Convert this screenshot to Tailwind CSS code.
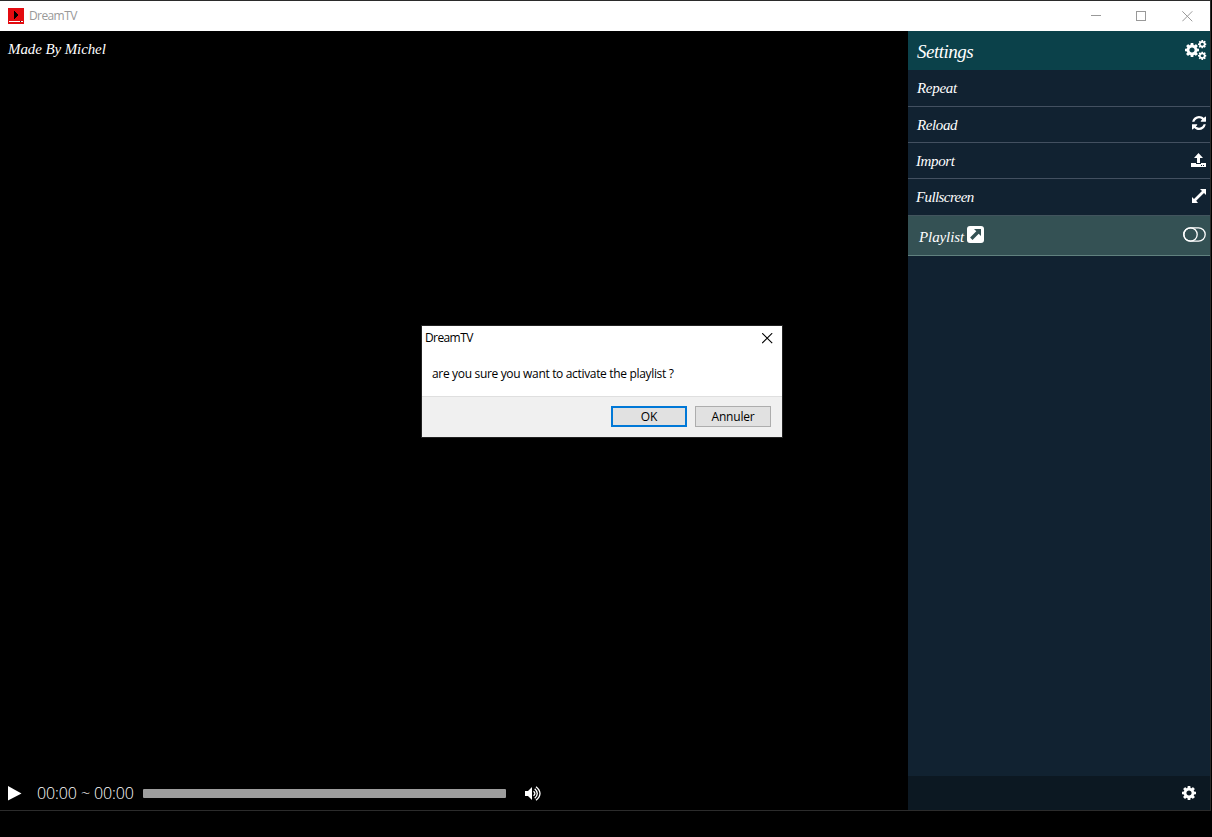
<!DOCTYPE html>
<html lang="en">
<head>
<meta charset="utf-8">
<title>DreamTV</title>
<script src="https://cdn.jsdelivr.net/npm/@tailwindcss/browser@4"></script>
</head>
<body class="relative h-[837px] w-[1212px] overflow-hidden bg-black">
<svg class="hidden">
  <symbol id="cog" viewBox="128 128 1536 1536"><path d="M1180 896q0-118-83-201t-201-83-201 83-83 201 83 201 201 83 201-83 83-201zm484-109v222q0 12-8 23t-20 13l-185 28q-19 54-39 91 35 50 107 138 10 12 10 25t-9 23q-27 37-99 108t-94 71q-12 0-26-9l-138-108q-44 23-91 38-16 136-29 186-7 28-36 28h-222q-14 0-24.500-8.500t-11.500-21.500l-28-184q-49-16-90-37l-141 107q-10 9-25 9-14 0-25-11-126-114-165-168-7-10-7-23 0-12 8-23 15-21 51-66.500t54-70.500q-27-50-41-99l-183-27q-13-2-21-12.500t-8-23.500v-222q0-12 8-23t19-13l186-28q14-46 39-92-40-57-107-138-10-12-10-24 0-10 9-23 26-36 98.500-107.500t94.500-71.500q13 0 26 10l138 107q44-23 91-38 16-136 29-186 7-28 36-28h222q14 0 24.500 8.500t11.500 21.500l28 184q49 16 90 37l142-107q9-9 24-9 13 0 25 10 129 119 165 170 7 8 7 22 0 12-8 23-15 21-51 66.500t-54 70.500q26 50 41 98l183 28q13 2 21 12.500t8 23.500z"/></symbol>
</svg>
<div class="flex h-[811px] w-[1211px] flex-col border-t border-r border-b border-[#2b2b2b]">
  <header class="flex h-[30px] shrink-0 items-center bg-white pl-2 text-[#999]">
    <svg class="-mt-px h-4 w-4" viewBox="0 0 16 16" shape-rendering="crispEdges"><rect width="16" height="16" fill="#e30b10"/><path d="M6 3v8l5-4z" fill="#000"/><rect x="1" y="13" width="14" height="1" fill="#fff"/><rect x="12" y="13" width="1" height="1" fill="#333"/></svg>
    <span class="ml-[5px] font-['Open_Sans',sans-serif] text-[12px] tracking-[-0.6px]">DreamTV</span>
    <div class="ml-auto flex items-center pr-[17px]">
      <svg class="h-[11px] w-[11px]" viewBox="0 0 11 11" shape-rendering="crispEdges"><path d="M0 4.500h10" stroke="#999"/></svg>
      <svg class="ml-[34px] h-[11px] w-[11px]" viewBox="0 0 11 11" shape-rendering="crispEdges"><path d="M.5.5h9v9h-9z" fill="none" stroke="#999"/></svg>
      <svg class="ml-[35px] h-[11px] w-[11px]" viewBox="0 0 11 11"><path d="M.3.3l10 10M10.300.3l-10 10" stroke="#999"/></svg>
    </div>
  </header>
  <div class="flex min-h-0 flex-1">
    <main class="flex w-[908px] flex-col justify-between text-white">
      <div class="flex h-9 items-center pl-2 font-['Liberation_Serif',serif] text-[15px] tracking-[-0.1px] italic">Made By Michel</div>
      <div class="flex h-[34px] items-center pl-2">
        <svg class="h-[15px] w-[14px]" viewBox="0 0 14 15" fill="#fff"><path d="M0 0l13.500 7.500L0 14.500z"/></svg>
        <span class="ml-[15px] w-[106px] font-['Open_Sans',sans-serif] text-[16px] font-light tracking-[-0.1px] whitespace-nowrap">00:00 ~ 00:00</span>
        <div class="h-[9px] w-[363px] rounded-[1px] bg-[#9d9d9d]"></div>
        <svg class="ml-[19px] h-[15px] w-4" viewBox="0 0 16 15"><path d="M0 5h3l4-4v13l-4-4H0z" fill="#fff"/><path d="M8.500 5.200q2.800 2.300 0 4.600M9.700 2.700q5.200 4.800 0 9.600M11 .7q8 6.800 0 13.600" fill="none" stroke="#fff" stroke-width="1.300"/></svg>
      </div>
    </main>
    <aside class="flex w-[302px] flex-col bg-[#112231] font-['Liberation_Serif',serif] text-[15px] text-white italic">
      <div class="flex h-[39px] shrink-0 items-center justify-between bg-[#0b414a] pr-[3px] pl-[9px] text-[19px] tracking-[-0.5px]">
        <span class="mt-[3px]">Settings</span>
        <svg class="-mt-[2px] h-5 w-[22px]" viewBox="0 0 22 20" fill="#fff"><use href="#cog" x="0" y="3" width="14" height="14"/><use href="#cog" x="13" y="0" width="8.500" height="8.500"/><use href="#cog" x="13" y="11.500" width="8.500" height="8.500"/></svg>
      </div>
      <div class="flex h-[37px] shrink-0 items-center border-b border-[#435060] pl-[9px] tracking-[-0.3px]">Repeat</div>
      <div class="flex h-9 shrink-0 items-center justify-between border-b border-[#435060] pr-1 pl-[9px]"><span class="mt-[2px] tracking-[-0.4px]">Reload</span>
        <svg class="-mt-[3px] h-[14px] w-[14px]" viewBox="128 128 1536 1536" fill="#fff"><path d="M1639 1056q0 5-1 7-64 268-268 434.500t-478 166.500q-146 0-282.500-55t-243.500-157l-129 129q-19 19-45 19t-45-19-19-45v-448q0-26 19-45t45-19h448q26 0 45 19t19 45-19 45l-137 137q71 66 161 102t187 36q134 0 250-65t186-179q11-17 53-117 8-23 30-23h192q13 0 22.500 9.500t9.500 22.500zm25-800v448q0 26-19 45t-45 19h-448q-26 0-45-19t-19-45 19-45l138-138q-148-137-349-137-134 0-250 65t-186 179q-11 17-53 117-8 23-30 23h-199q-13 0-22.500-9.500t-9.500-22.500v-7q65-268 270-434.500t480-166.500q146 0 284 55.500t245 156.500l130-129q19-19 45-19t45 19 19 45z"/></svg>
      </div>
      <div class="flex h-9 shrink-0 items-center justify-between border-b border-[#435060] pr-1 pl-2"><span class="mt-[2px] tracking-[-0.4px]">Import</span>
        <svg class="-mt-px h-[14px] w-[15px]" viewBox="0 0 15 14" fill="#fff"><path d="M7.500 0L12 5H9v5H6V5H3z"/><path fill-rule="evenodd" d="M0 10h5v1h5v-1h5v4H0zM10 12h1v1h-1zM12 12h1v1h-1z"/></svg>
      </div>
      <div class="flex h-9 shrink-0 items-center justify-between pr-1 pl-2"><span class="tracking-[-0.6px]">Fullscreen</span>
        <svg class="-mt-[2px] h-[14px] w-[14px]" viewBox="0 0 14 14" fill="#fff"><path d="M8 0h6v6l-2-2-7.800 7.800L6 14H0V8l2 2L10 2z"/></svg>
      </div>
      <div class="flex h-[41px] shrink-0 items-center border-t border-b border-t-[#42545d] border-b-[#61817f] bg-[#345154] pr-1 pl-[11px]"><span class="mt-1 w-12 tracking-[-0.1px]">Playlist</span>
        <svg class="-mt-[3px] h-[17px] w-[17px]" viewBox="0 0 17 17"><rect width="17" height="17" rx="3" fill="#fff"/><path d="M7 3h7v7l-2.300-2.300-6.200 6.200-2.400-2.400 6.200-6.200z" fill="#345154"/></svg>
        <svg class="-mt-[3px] ml-auto h-[15px] w-[23px]" viewBox="0 0 23 15" fill="none" stroke="#fff" stroke-width="1.300"><rect x=".8" y=".8" width="21.400" height="13.400" rx="6.700"/><circle cx="7.500" cy="7.500" r="6.700"/></svg>
      </div>
      <div class="mt-auto flex h-[34px] items-center justify-end bg-[#0c1822] pr-[14px]"><svg class="h-[14px] w-[14px]" fill="#fff"><use href="#cog" width="14" height="14"/></svg></div>
    </aside>
  </div>
</div>
<div role="dialog" class="absolute top-[325px] left-[421px] flex h-[113px] w-[362px] flex-col border border-[#222] bg-white font-['Open_Sans',sans-serif] text-[12px] text-black">
  <div class="flex h-6 items-center justify-between pr-[9px] pl-[3px]"><span class="tracking-[-0.6px]">DreamTV</span>
    <svg class="h-[11px] w-[11px]" viewBox="0 0 11 11"><path d="M.2.2l10 10M10.200.2l-10 10" stroke="#000" stroke-width="1.100"/></svg>
  </div>
  <div class="flex h-[46px] items-center pt-[2px] pl-[10px] tracking-[-0.33px] whitespace-nowrap">are you sure you want to activate the playlist ?</div>
  <div class="flex h-[41px] items-center justify-end gap-2 border-t border-[#dfdfdf] bg-[#f0f0f0] pr-[11px] pb-[2px]">
    <button class="flex h-[21px] w-[76px] items-center justify-center border-2 border-[#0078d7] bg-[#e1e1e1] pt-px">OK</button>
    <button class="flex h-[21px] w-[76px] items-center justify-center border border-[#adadad] bg-[#e1e1e1] pt-px tracking-[-0.2px]">Annuler</button>
  </div>
</div>
</body>
</html>
